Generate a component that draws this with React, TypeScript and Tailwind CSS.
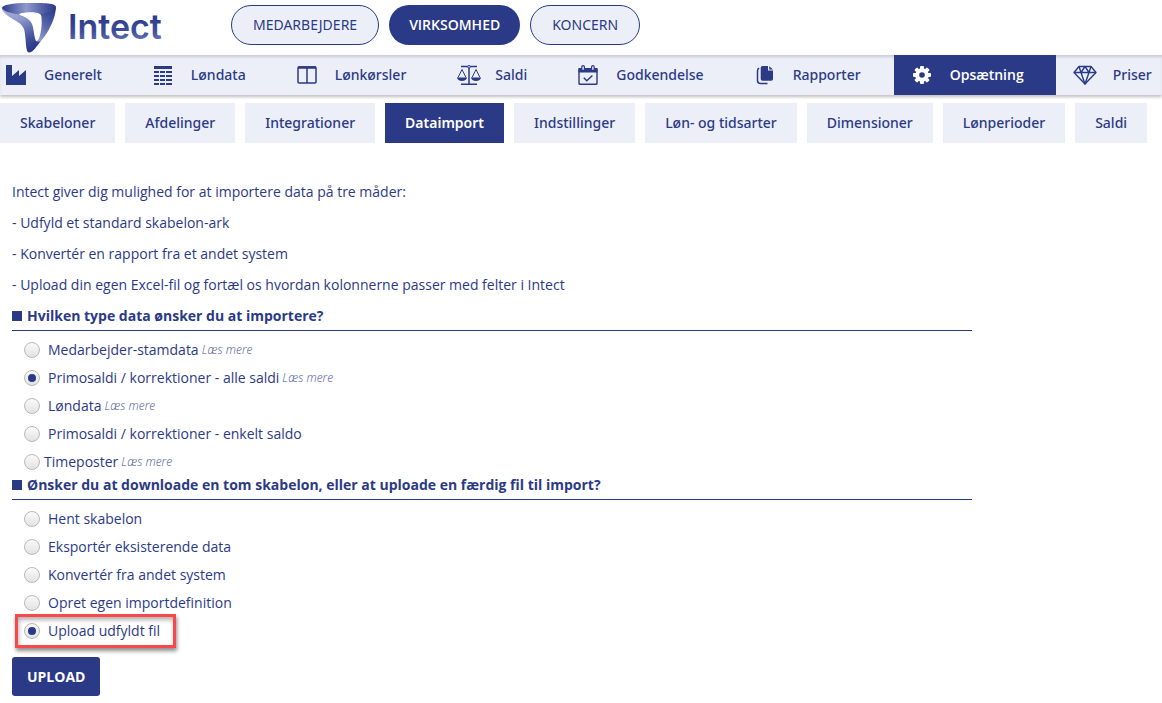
import { useState, type ReactNode } from 'react';
import clsx from 'clsx';

type NavItem = {
  label: string;
  icon: ReactNode;
};

type Option = {
  id: string;
  label: string;
  readMore?: boolean;
  tight?: boolean;
  marked?: boolean;
};

const AREAS = ['MEDARBEJDERE', 'VIRKSOMHED', 'KONCERN'];

const NAV: NavItem[] = [
  { label: 'Generelt', icon: <FactoryIcon /> },
  { label: 'Løndata', icon: <TableIcon /> },
  { label: 'Lønkørsler', icon: <ColumnsIcon /> },
  { label: 'Saldi', icon: <ScalesIcon /> },
  { label: 'Godkendelse', icon: <CalendarIcon /> },
  { label: 'Rapporter', icon: <PagesIcon /> },
  { label: 'Opsætning', icon: <GearIcon /> },
  { label: 'Priser', icon: <DiamondIcon /> },
];

const TABS = [
  'Skabeloner',
  'Afdelinger',
  'Integrationer',
  'Dataimport',
  'Indstillinger',
  'Løn- og tidsarter',
  'Dimensioner',
  'Lønperioder',
  'Saldi',
];

const INTRO = [
  'Intect giver dig mulighed for at importere data på tre måder:',
  '- Udfyld et standard skabelon-ark',
  '- Konvertér en rapport fra et andet system',
  '- Upload din egen Excel-fil og fortæl os hvordan kolonnerne passer med felter i Intect',
];

const DATA_TYPES: Option[] = [
  { id: 'employees', label: 'Medarbejder-stamdata', readMore: true },
  { id: 'balances', label: 'Primosaldi / korrektioner - alle saldi', readMore: true },
  { id: 'salary', label: 'Løndata', readMore: true },
  { id: 'balance', label: 'Primosaldi / korrektioner - enkelt saldo' },
  { id: 'time', label: 'Timeposter', readMore: true, tight: true },
];

const ACTIONS: Option[] = [
  { id: 'template', label: 'Hent skabelon' },
  { id: 'export', label: 'Eksportér eksisterende data' },
  { id: 'convert', label: 'Konvertér fra andet system' },
  { id: 'definition', label: 'Opret egen importdefinition' },
  { id: 'upload', label: 'Upload udfyldt fil', marked: true },
];

function Logo() {
  return (
    <svg width="166" height="55" viewBox="0 0 166 55" role="img" aria-label="Intect">
      <defs>
        <linearGradient id="band-top" x1="0" y1="0" x2="1" y2="0">
          <stop offset="0" stopColor="#2b3a8a" />
          <stop offset="0.2" stopColor="#5a68ac" />
          <stop offset="0.45" stopColor="#8e9acb" />
          <stop offset="0.8" stopColor="#4a58a0" />
          <stop offset="1" stopColor="#2b3a8a" />
        </linearGradient>
        <linearGradient id="band-right" x1="0.7" y1="0" x2="0.3" y2="1">
          <stop offset="0" stopColor="#2b3a8a" />
          <stop offset="0.5" stopColor="#5a68ac" />
          <stop offset="1" stopColor="#a3aedb" />
        </linearGradient>
        <linearGradient id="band-left" x1="0.1" y1="0" x2="0.5" y2="1">
          <stop offset="0" stopColor="#a3aedb" />
          <stop offset="0.35" stopColor="#8e9acb" />
          <stop offset="0.75" stopColor="#4a58a0" />
          <stop offset="1" stopColor="#2b3a8a" />
        </linearGradient>
        <linearGradient id="word" x1="0" y1="0" x2="0.06" y2="1">
          <stop offset="0.3" stopColor="#2b3a8a" />
          <stop offset="0.65" stopColor="#3f4e9b" />
          <stop offset="1" stopColor="#7482bd" />
        </linearGradient>
      </defs>
      <path
        d="M2 8C2 5 12 3 28 3C44 3 56 3 56 7C56 12 49 16 41.500 16C40 12 33 12 26 12.500C21 13 19 13.500 19 15L12 14C5 13 2 11 2 8Z"
        fill="url(#band-top)"
      />
      <path
        d="M41 14C49 13 54 11 56 6.500C56 14 52 27 43 38.500L37 46L34 41C37 42 38.500 40 39.500 37C41.500 31 42.500 22 41 14Z"
        fill="url(#band-right)"
      />
      <path
        d="M2 8C4 12 12 13 19 14.500C25 17 30 19 32 24C34 29 34 37 36 41C37 42 39 42 40.500 41C37 46 33 52.500 29 52.500C25 52 26.500 38 24 29C21 20 4 18 2 8Z"
        fill="url(#band-left)"
      />
      <text
        x="68"
        y="39"
        fontFamily="Inter, sans-serif"
        fontSize="34"
        fontWeight="600"
        fill="url(#word)"
      >
        Intect
      </text>
    </svg>
  );
}

function FactoryIcon() {
  return (
    <svg width="20" height="20" viewBox="0 0 20 20" fill="currentColor" aria-hidden="true">
      <path d="M0 0h6v11l7-6v6l7-6v15H0z" />
    </svg>
  );
}

function TableIcon() {
  return (
    <svg width="18" height="19" viewBox="0 0 18 19" fill="currentColor" aria-hidden="true">
      <path d="M0 0h18v3H0zM0 5h5v2H0zM6 5h5v2H6zM12 5h6v2h-6zM0 9h5v2H0zM6 9h5v2H6zM12 9h6v2h-6zM0 13h5v2H0zM6 13h5v2H6zM12 13h6v2h-6zM0 17h5v2H0zM6 17h5v2H6zM12 17h6v2h-6z" />
    </svg>
  );
}

function ColumnsIcon() {
  return (
    <svg width="20" height="18" viewBox="0 0 20 18" fill="none" stroke="currentColor" aria-hidden="true">
      <rect x="1" y="1" width="18" height="16" rx="1" strokeWidth="1.500" />
      <path d="M1 1.500h18" strokeWidth="2.500" />
      <path d="M10 2v15" strokeWidth="1.500" />
    </svg>
  );
}

function ScalesIcon() {
  return (
    <svg width="28" height="20" viewBox="-4 0 28 20" fill="none" stroke="currentColor" aria-hidden="true">
      <path d="M4 1.500h16M4 19.200h16M12 3v16" strokeWidth="1.500" />
      <circle cx="12" cy="1.800" r="1.300" fill="#eceff8" />
      <path d="M1 12.500L5 4.500l4 8M15 12.500l4-8 4 8" />
      <path d="M0 12.500h10a5 3.500 0 0 1-10 0zM14 12.500h10a5 3.500 0 0 1-10 0z" fill="currentColor" stroke="none" />
    </svg>
  );
}

function CalendarIcon() {
  return (
    <svg width="20" height="20" viewBox="0 0 20 20" fill="none" stroke="currentColor" aria-hidden="true">
      <rect x="1" y="4" width="18" height="15.300" rx="0.800" strokeWidth="1.400" />
      <path d="M0.500 3h19v4.500h-19z" fill="currentColor" stroke="none" />
      <rect x="3.800" y="0.600" width="2.600" height="5" rx="1.300" fill="#eceff8" strokeWidth="1.200" />
      <rect x="13.600" y="0.600" width="2.600" height="5" rx="1.300" fill="#eceff8" strokeWidth="1.200" />
      <path d="M5.800 12.800l3 2.900 5.600-5.200" strokeWidth="1.500" />
    </svg>
  );
}

function PagesIcon() {
  return (
    <svg width="18" height="20" viewBox="0 0 18 20" fill="currentColor" aria-hidden="true">
      <path d="M6.500 1H12v4.500h5V14a1.800 1.800 0 0 1-1.800 1.800H6.500A1.800 1.800 0 0 1 4.700 14V2.800A1.800 1.800 0 0 1 6.500 1z" />
      <path d="M13.200 1.200L17 4.600h-3.800z" />
      <path
        d="M3.200 3.300C1.800 3.600 1.500 4.500 1.500 6v9.500c0 2.200.8 3 3 3h7"
        fill="none"
        stroke="currentColor"
        strokeWidth="1.500"
      />
    </svg>
  );
}

function GearIcon() {
  return (
    <svg width="18" height="18" viewBox="0 0 18 18" aria-hidden="true">
      <g fill="currentColor">
        <rect x="7" y="0" width="4" height="18" rx="1" />
        <rect x="7" y="0" width="4" height="18" rx="1" transform="rotate(45 9 9)" />
        <rect x="7" y="0" width="4" height="18" rx="1" transform="rotate(90 9 9)" />
        <rect x="7" y="0" width="4" height="18" rx="1" transform="rotate(135 9 9)" />
        <circle cx="9" cy="9" r="6.800" />
      </g>
      <circle cx="9" cy="9" r="2.800" fill="#2b3a87" />
    </svg>
  );
}

function DiamondIcon() {
  return (
    <svg
      width="24"
      height="20"
      viewBox="0 0 24 20"
      fill="none"
      stroke="currentColor"
      strokeWidth="1.400"
      strokeLinejoin="round"
      aria-hidden="true"
    >
      <path d="M6 1.500h12l5 6L12 19 1 7.500z" />
      <path d="M1 7.500h22M6 1.500l2 6L12 19l4-11.500 2-6M8 7.500l4-6 4 6" />
    </svg>
  );
}

function SectionHeading({ id, children }: { id: string; children: ReactNode }) {
  return (
    <h2
      id={id}
      className="flex items-center gap-[5px] border-b border-[#2b3a87] pb-[5px] text-sm leading-[18px] font-bold"
    >
      <span className="size-[10px] bg-[#2b3a87]" />
      {children}
    </h2>
  );
}

type OptionListProps = {
  name: string;
  labelledBy: string;
  options: Option[];
  value: string;
  onChange: (id: string) => void;
};

function OptionList({ name, labelledBy, options, value, onChange }: OptionListProps) {
  return (
    <div role="radiogroup" aria-labelledby={labelledBy} className="mt-[5px] flex flex-col items-start pl-3">
      {options.map((o) => (
        <div key={o.id} className="relative flex h-7 items-center">
          <input
            type="radio"
            id={`${name}-${o.id}`}
            name={name}
            checked={value === o.id}
            onChange={() => onChange(o.id)}
            className="grid size-4 appearance-none place-items-center rounded-full border border-[#b9b9b9] bg-linear-to-b from-[#fafafa] to-[#e2e2e2] before:size-2 before:rounded-full checked:before:bg-[#2b3a87]"
          />
          <label htmlFor={`${name}-${o.id}`} className={o.tight ? 'pl-1' : 'pl-2'}>
            {o.label}
          </label>
          {o.readMore ? (
            <a href="#" className="ml-[3px] text-xs font-light text-[#4a569c] italic">
              Læs mere
            </a>
          ) : null}
          {o.marked ? (
            <span className="pointer-events-none absolute -inset-y-[3px] -right-4 -left-[9px] border-3 border-[#f8484a] shadow-[1px_3px_4px_rgba(0,0,0,0.45),inset_1px_3px_4px_rgba(0,0,0,0.3)]" />
          ) : null}
        </div>
      ))}
    </div>
  );
}

export default function App() {
  const [area, setArea] = useState('VIRKSOMHED');
  const [page, setPage] = useState('Opsætning');
  const [tab, setTab] = useState('Dataimport');
  const [dataType, setDataType] = useState('balances');
  const [action, setAction] = useState('upload');

  return (
    <div className="min-h-screen overflow-x-hidden bg-white font-['Open_Sans',sans-serif] text-sm text-[#2b3a87]">
      <header className="flex h-[55px] items-start">
        <Logo />
        <div className="ml-[65px] flex gap-[10px] pt-[5px]">
          {AREAS.map((a) => (
            <button
              key={a}
              onClick={() => setArea(a)}
              className={clsx(
                'h-10 rounded-full',
                a === area
                  ? 'bg-[#2b3a87] px-5 font-semibold text-white'
                  : "border border-[#2b3a87] bg-[#eceff8] px-[21px] font-['Noto_Sans',sans-serif]",
              )}
            >
              {a}
            </button>
          ))}
        </div>
      </header>

      <nav className="flex h-10 gap-px bg-[#eceff8] whitespace-nowrap shadow-[0_2px_3px_rgba(0,0,0,0.25),inset_0_3px_3px_-1px_rgba(0,0,0,0.15)]">
        {NAV.map((item) => (
          <a
            key={item.label}
            href="#"
            onClick={() => setPage(item.label)}
            className={clsx(
              'flex shrink-0 items-center gap-3 pr-8 pl-3 first:pl-0',
              item.label === page
                ? 'bg-[#2b3a87] font-semibold text-white'
                : "font-['Noto_Sans',sans-serif] font-medium",
            )}
          >
            <span className="grid w-8 place-items-center">{item.icon}</span>
            {item.label}
          </a>
        ))}
      </nav>

      <div className="mt-2 flex gap-[10px] font-['Noto_Sans',sans-serif] whitespace-nowrap">
        {TABS.map((t) => (
          <button
            key={t}
            onClick={() => setTab(t)}
            className={clsx(
              'h-10 shrink-0 px-5',
              t === tab ? 'bg-[#2b3a87] font-semibold text-white' : 'bg-[#eceff8] font-medium',
            )}
          >
            {t}
          </button>
        ))}
      </div>

      <main className="max-w-[984px] px-3 pt-[33px] pb-[7px]">
        <div className="mb-[7px] leading-[31px]">
          {INTRO.map((line) => (
            <p key={line}>{line}</p>
          ))}
        </div>

        <SectionHeading id="type-heading">Hvilken type data ønsker du at importere?</SectionHeading>
        <OptionList
          name="type"
          labelledBy="type-heading"
          options={DATA_TYPES}
          value={dataType}
          onChange={setDataType}
        />

        <SectionHeading id="action-heading">
          Ønsker du at downloade en tom skabelon, eller at uploade en færdig fil til import?
        </SectionHeading>
        <OptionList
          name="action"
          labelledBy="action-heading"
          options={ACTIONS}
          value={action}
          onChange={setAction}
        />

        <button className="mt-3 h-[39px] rounded-[3px] bg-[#2b3a87] px-[15px] font-bold text-white">UPLOAD</button>
      </main>
    </div>
  );
}
